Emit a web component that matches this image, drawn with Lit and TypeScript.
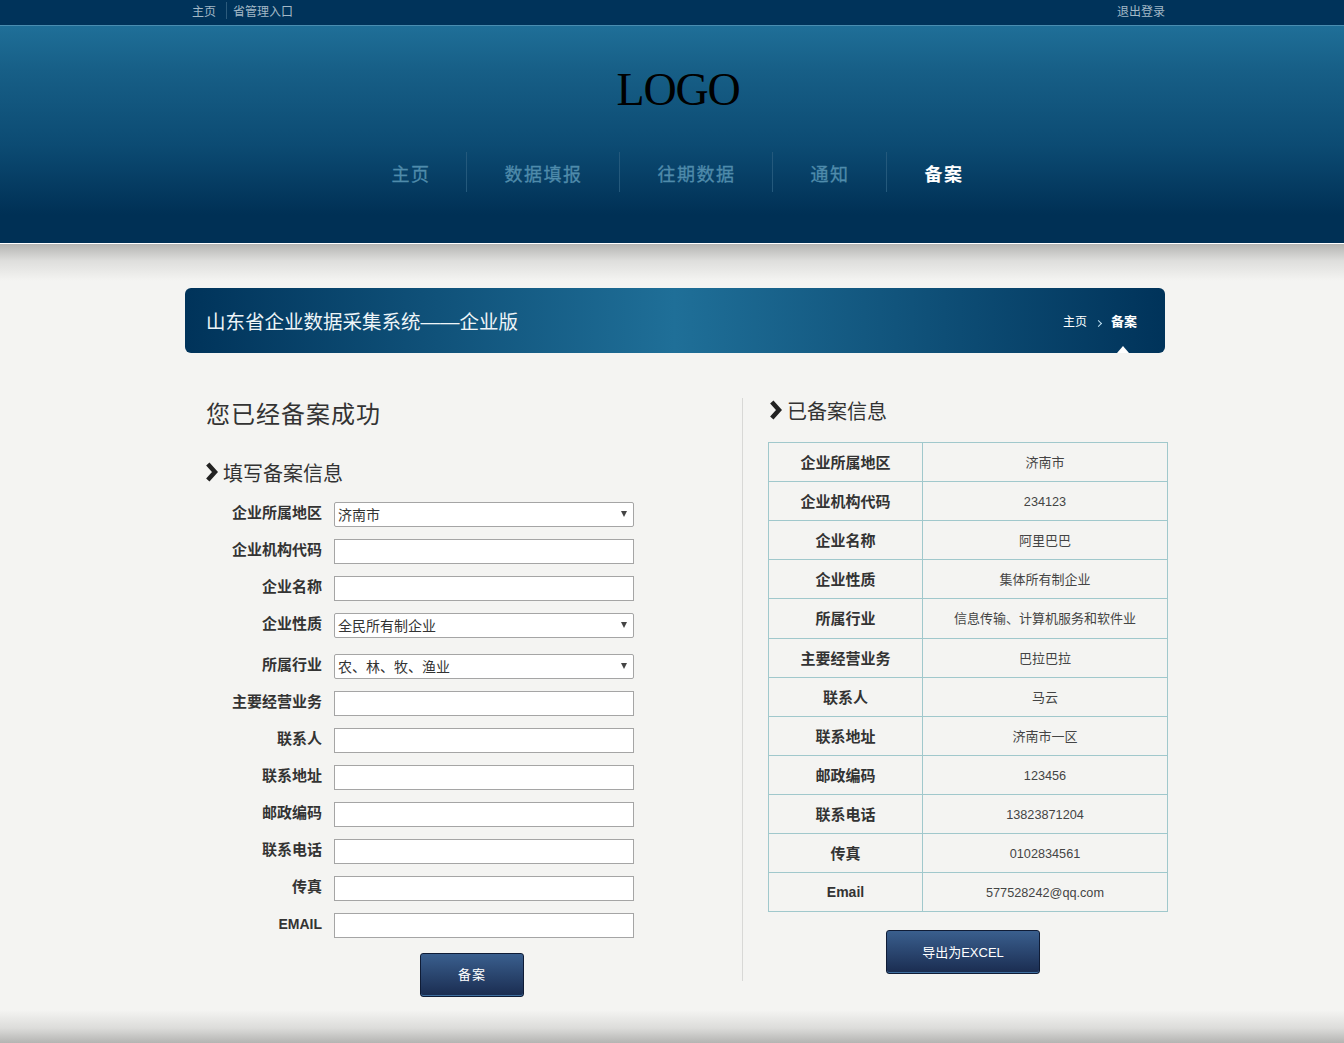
import { LitElement, html, css, svg } from 'lit';
import { customElement } from 'lit/decorators.js';

const SANS = css`"Liberation Sans", "Noto Sans CJK SC", sans-serif`;

const chevron = html`<svg class="chev" viewBox="0 0 13 20" width="13" height="20">
  ${svg`<polyline points="2.8,2 10,10 2.8,18" fill="none" stroke="#222" stroke-width="4.5"/>`}
</svg>`;

type Field = { label: string; options?: string; tall?: boolean };

const fields: Field[] = [
  { label: '企业所属地区', options: '济南市' },
  { label: '企业机构代码' },
  { label: '企业名称' },
  { label: '企业性质', options: '全民所有制企业' },
  { label: '所属行业', options: '农、林、牧、渔业', tall: true },
  { label: '主要经营业务' },
  { label: '联系人' },
  { label: '联系地址' },
  { label: '邮政编码' },
  { label: '联系电话' },
  { label: '传真' },
  { label: 'EMAIL' },
];

const info: [string, string, boolean?][] = [
  ['企业所属地区', '济南市'],
  ['企业机构代码', '234123'],
  ['企业名称', '阿里巴巴'],
  ['企业性质', '集体所有制企业'],
  ['所属行业', '信息传输、计算机服务和软件业', true],
  ['主要经营业务', '巴拉巴拉'],
  ['联系人', '马云'],
  ['联系地址', '济南市一区'],
  ['邮政编码', '123456'],
  ['联系电话', '13823871204'],
  ['传真', '0102834561'],
  ['Email', '577528242@qq.com'],
];

const navItems = ['主页', '数据填报', '往期数据', '通知', '备案'];

@customElement('app-root')
export class AppRoot extends LitElement {
  static styles = css`
    :host {
      display: block;
      background: #f4f4f2;
      font-family: ${SANS};
      color: #333;
    }
    .wrap {
      width: 980px;
      margin-left: 185px;
    }
    .topbar {
      height: 25px;
      background: #00335a;
      border-bottom: 1px solid #4a8db0;
      font-size: 12px;
      color: #a3b8c6;
    }
    .topbar .wrap {
      display: flex;
      justify-content: space-between;
      align-items: center;
      height: 20px;
    }
    .topbar .links {
      display: flex;
      align-items: center;
      padding-left: 7px;
    }
    .topbar .links span:first-child {
      padding-right: 10px;
      margin-right: 6px;
      border-right: 1px solid #2d5b7c;
    }
    .masthead {
      height: 217px;
      background: linear-gradient(#1f6f98 0, #175f87 20%, #0c4b73 55%, #003055 87%, #003055 100%);
      border-bottom: 1px solid #fff;
      display: flex;
      flex-direction: column;
      align-items: center;
    }
    .logo {
      margin-top: 36px;
      padding-left: 12px;
      height: 55px;
      line-height: 55px;
      font-family: "Liberation Serif", serif;
      font-size: 46px;
      letter-spacing: -1.2px;
      color: #000;
    }
    nav {
      display: flex;
      margin-top: 35px;
      padding-left: 8px;
    }
    nav a {
      height: 40px;
      line-height: 46px;
      padding: 0 36px 0 38px;
      font-size: 18px;
      letter-spacing: 1.5px;
      color: #4f8bab;
      -webkit-text-stroke: 0.3px #4f8bab;
      border-right: 1px solid #24597c;
    }
    nav a:first-child {
      padding: 0 35px 0 39px;
    }
    nav a:last-child {
      border-right: none;
    }
    nav a.on {
      color: #fff;
      -webkit-text-stroke: 0;
      font-weight: 700;
    }
    .shade {
      height: 37px;
      background: linear-gradient(#b4b4b2, #dededc 45%, #f4f4f2);
    }
    .title {
      position: relative;
      height: 65px;
      margin-top: 7px;
      padding: 0 28px 0 21px;
      display: flex;
      align-items: center;
      justify-content: space-between;
      border-radius: 6px;
      background: linear-gradient(90deg, #00335a, #1f6f98 50%, #00335a);
      color: #fff;
    }
    .title h1 {
      margin: 0;
      font-size: 19.5px;
      font-weight: 400;
      color: #eef5f8;
    }
    .crumbs {
      display: flex;
      align-items: center;
      font-size: 12px;
    }
    .crumbs b {
      font-size: 13px;
    }
    .crumbs i {
      width: 4px;
      height: 4px;
      margin: 5px 10px 0 9px;
      border-top: 1px solid #bfe0f2;
      border-right: 1px solid #bfe0f2;
      transform: rotate(45deg);
    }
    .title::after {
      content: '';
      position: absolute;
      right: 36px;
      bottom: 0;
      border-left: 6px solid transparent;
      border-right: 6px solid transparent;
      border-bottom: 7px solid #fff;
    }
    .main {
      display: grid;
      grid-template-columns: 557px 1px 1fr;
      padding-top: 45px;
    }
    .rule {
      height: 583px;
      background: #d8d8d6;
    }
    .left {
      padding-left: 21px;
    }
    .right {
      padding-left: 25px;
    }
    h2 {
      margin: 0;
      height: 32px;
      line-height: 34px;
      font-size: 24px;
      font-weight: 400;
      letter-spacing: 1px;
      color: #333;
    }
    h3 {
      display: flex;
      align-items: center;
      gap: 5px;
      margin: 0;
      height: 24px;
      line-height: 24px;
      font-size: 20px;
      font-weight: 400;
      color: #333;
    }
    .left h3 {
      margin-top: 32px;
    }
    .right h3 {
      margin-top: 2px;
      padding-left: 2px;
    }
    .chev {
      flex: none;
      margin: -4px 0 0 -1px;
    }
    form {
      display: flex;
      flex-direction: column;
      gap: 12px;
      margin-top: 16px;
    }
    .row {
      display: grid;
      grid-template-columns: 116px 300px;
      column-gap: 12px;
      align-items: center;
      height: 25px;
    }
    .row.tall {
      margin-top: 4px;
    }
    label {
      text-align: right;
      font-size: 15px;
      font-weight: 700;
      line-height: 22px;
      color: #333;
      position: relative;
      top: -2px;
    }
    label.latin {
      font-size: 14px;
    }
    input,
    select {
      box-sizing: border-box;
      width: 300px;
      height: 25px;
      margin: 0;
      border: 1px solid #a5a5a5;
      background: #fff;
      font-family: ${SANS};
      font-size: 14px;
      color: #333;
      outline: none;
    }
    input {
      padding: 0 3px;
    }
    .pick {
      position: relative;
      display: block;
      height: 25px;
    }
    select {
      display: block;
      appearance: none;
      border-radius: 2px;
      padding: 0 16px 0 3px;
    }
    .pick::after {
      content: '';
      position: absolute;
      right: 7px;
      top: 9px;
      border-left: 3px solid transparent;
      border-right: 3px solid transparent;
      border-top: 6px solid #444;
      pointer-events: none;
    }
    .btn {
      display: block;
      box-sizing: border-box;
      height: 44px;
      padding: 0 0 2px;
      border: 1px solid #0f1c36;
      border-radius: 3px;
      background: linear-gradient(#3a5f8e, #1a2c50);
      box-shadow: inset 0 -1px 0 #3f6fa0;
      font-family: ${SANS};
      font-size: 13px;
      color: #fff;
    }
    .btn.save {
      width: 104px;
      margin: 15px 0 0 214px;
      padding-bottom: 4px;
      letter-spacing: 1px;
    }
    .btn.export {
      width: 154px;
      margin: 18px 0 0 118px;
    }
    table {
      width: 400px;
      margin-top: 18px;
      border-collapse: collapse;
      table-layout: fixed;
    }
    th,
    td {
      box-sizing: border-box;
      height: 39px;
      padding: 0 0 2px;
      border: 1px solid #a0c8cc;
      text-align: center;
      font-size: 13px;
      color: #444;
    }
    td.num {
      padding: 1px 0 0;
      font-size: 12.7px;
    }
    th {
      width: 154px;
      font-size: 15px;
      font-weight: 700;
      color: #333;
    }
    tr.tall td,
    tr.tall th {
      height: 40px;
    }
    th.latin {
      padding: 0;
      font-size: 14px;
    }
    .foot {
      height: 33px;
      margin-top: 13px;
      background: linear-gradient(#f4f4f2, #dcdcda 55%, #b4b4b2);
    }
  `;

  private renderField(f: Field) {
    const latin = f.label === 'EMAIL';
    return html`<div class="row ${f.tall ? 'tall' : ''}">
      <label class=${latin ? 'latin' : ''}>${f.label}</label>
      ${f.options
        ? html`<span class="pick"><select><option>${f.options}</option></select></span>`
        : html`<input type="text" />`}
    </div>`;
  }

  render() {
    return html`
      <div class="topbar">
        <div class="wrap">
          <div class="links"><span>主页</span><span>省管理入口</span></div>
          <span>退出登录</span>
        </div>
      </div>
      <header class="masthead">
        <div class="logo">LOGO</div>
        <nav>
          ${navItems.map((n) => html`<a class=${n === '备案' ? 'on' : ''}>${n}</a>`)}
        </nav>
      </header>
      <div class="shade"></div>
      <div class="wrap">
        <div class="title">
          <h1>山东省企业数据采集系统——企业版</h1>
          <div class="crumbs"><span>主页</span><i></i><b>备案</b></div>
        </div>
        <div class="main">
          <section class="left">
            <h2>您已经备案成功</h2>
            <h3>${chevron}填写备案信息</h3>
            <form @submit=${(e: Event) => e.preventDefault()}>
              ${fields.map((f) => this.renderField(f))}
            </form>
            <button class="btn save">备案</button>
          </section>
          <div class="rule"></div>
          <section class="right">
            <h3>${chevron}已备案信息</h3>
            <table>
              ${info.map(
                ([k, v, tall]) => html`<tr class=${tall ? 'tall' : ''}>
                  <th class=${k === 'Email' ? 'latin' : ''}>${k}</th>
                  <td class=${/^[\x00-\x7f]+$/.test(v) ? 'num' : ''}>${v}</td>
                </tr>`
              )}
            </table>
            <button class="btn export">导出为EXCEL</button>
          </section>
        </div>
      </div>
      <div class="foot"></div>
    `;
  }
}
